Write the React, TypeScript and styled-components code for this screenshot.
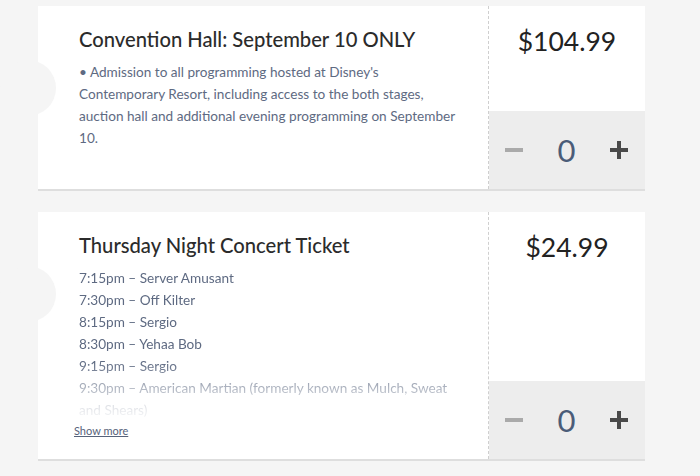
import styled, { createGlobalStyle } from "styled-components";

const GlobalStyle = createGlobalStyle`
  html, body {
    margin: 0;
    padding: 0;
    background: #f5f5f5;
    font-family: Lato, "Open Sans", sans-serif;
  }
`;

const Page = styled.div`
  display: flex;
  flex-direction: column;
  gap: 21px;
  padding: 6px 0 0 38px;
  width: 607px;
`;

const Ticket = styled.div`
  position: relative;
  display: flex;
  background: #fff;
  border-bottom: 2px solid #dedede;
  min-height: ${(props: { $height: number }) => props.$height}px;
`;

const Notch = styled.span`
  position: absolute;
  left: -38px;
  top: 54px;
  width: 56px;
  height: 56px;
  border-radius: 50%;
  background: #f5f5f5;
`;

const Body = styled.div`
  flex: 1;
  padding: 20px 30px 16px 41px;
  border-right: 1px dashed #cfcfcf;
`;

const Title = styled.h2`
  margin: 0 0 8px;
  font-size: 20.2px;
  font-weight: 500;
  color: #2b2b2b;
  line-height: 27px;
`;

const Desc = styled.div<{ $clamp?: boolean }>`
  font-size: 13.6px;
  line-height: 22px;
  color: #5e6a82;
  ${(props) =>
    props.$clamp &&
    `
    max-height: 152px;
    overflow: hidden;
    -webkit-mask-image: linear-gradient(to bottom, #000 62%, rgba(0,0,0,0.25) 88%, rgba(0,0,0,0.05) 100%);
    mask-image: linear-gradient(to bottom, #000 62%, rgba(0,0,0,0.25) 88%, rgba(0,0,0,0.05) 100%);
  `}
`;

const Line = styled.div``;

const ShowMore = styled.a`
  display: inline-block;
  margin: 3px 0 0 -5px;
  font-size: 11px;
  color: #56627a;
  text-decoration: underline;
`;

const Side = styled.div`
  width: 156px;
  display: flex;
  flex-direction: column;
`;

const Price = styled.div`
  flex: 1;
  text-align: center;
  padding-top: 19px;
  font-size: 26.5px;
  line-height: 32px;
  color: #222;
`;

const Qty = styled.div`
  height: 78px;
  background: #ededed;
  display: flex;
  align-items: center;
  justify-content: space-between;
  padding: 0 17px 0 16px;
`;

const QtyButton = styled.button<{ $tone: string }>`
  border: 0;
  background: none;
  padding: 0;
  width: 18px;
  height: 18px;
  display: flex;
  color: ${(props) => props.$tone};
`;

const Count = styled.span`
  font-size: 31px;
  color: #4b5c78;
  line-height: 1;
`;

function Minus() {
  return (
    <svg width="18" height="18" viewBox="0 0 18 18">
      <rect x="0" y="7" width="18" height="4" fill="currentColor" />
    </svg>
  );
}

function Plus() {
  return (
    <svg width="18" height="18" viewBox="0 0 18 18">
      <rect x="0" y="7" width="18" height="4" fill="currentColor" />
      <rect x="7" y="0" width="4" height="18" fill="currentColor" />
    </svg>
  );
}

function Quantity() {
  return (
    <Qty>
      <QtyButton $tone="#aaaaaa">
        <Minus />
      </QtyButton>
      <Count>0</Count>
      <QtyButton $tone="#4a4a4a">
        <Plus />
      </QtyButton>
    </Qty>
  );
}

const concert = [
  "7:15pm – Server Amusant",
  "7:30pm – Off Kilter",
  "8:15pm – Sergio",
  "8:30pm – Yehaa Bob",
  "9:15pm – Sergio",
  "9:30pm – American Martian (formerly known as Mulch, Sweat and Shears)",
];

export default function App() {
  return (
    <>
      <GlobalStyle />
      <Page>
        <Ticket $height={183}>
          <Notch />
          <Body>
            <Title>Convention Hall: September 10 ONLY</Title>
            <Desc>
              • Admission to all programming hosted at Disney's Contemporary Resort, including access to the both stages,
              auction hall and additional evening programming on September 10.
            </Desc>
          </Body>
          <Side>
            <Price>$104.99</Price>
            <Quantity />
          </Side>
        </Ticket>
        <Ticket $height={247}>
          <Notch />
          <Body>
            <Title>Thursday Night Concert Ticket</Title>
            <Desc $clamp>
              {concert.map((line) => (
                <Line key={line}>{line}</Line>
              ))}
            </Desc>
            <ShowMore>Show more</ShowMore>
          </Body>
          <Side>
            <Price>$24.99</Price>
            <Quantity />
          </Side>
        </Ticket>
      </Page>
    </>
  );
}
